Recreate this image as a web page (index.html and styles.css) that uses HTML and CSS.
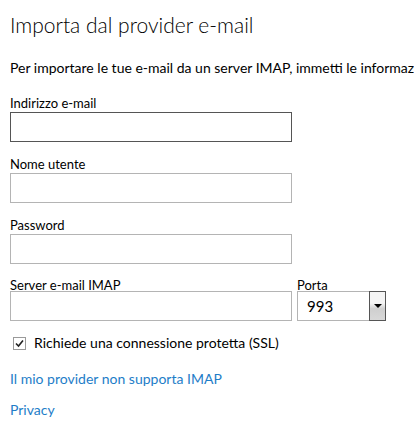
FILE: index.html
```html
<!DOCTYPE html>
<html lang="it">
<head>
<meta charset="utf-8">
<title>Importa dal provider e-mail</title>
<link rel="stylesheet" href="styles.css">
</head>
<body>
<div class="wrap">
	<h1 class="title">Importa dal provider e-mail</h1>
	<p class="intro">Per importare le tue e-mail da un server IMAP, immetti le informazioni richieste.</p>

	<div class="field">
		<label class="label">Indirizzo e-mail</label>
		<input class="input focus" type="text">
	</div>
	<div class="field">
		<label class="label">Nome utente</label>
		<input class="input" type="text">
	</div>
	<div class="field">
		<label class="label">Password</label>
		<input class="input" type="password">
	</div>
	<div class="row">
		<div class="field">
			<label class="label">Server e-mail IMAP</label>
			<input class="input" type="text">
		</div>
		<div class="field">
			<label class="label">Porta</label>
			<div class="select">
				<span class="select_value">993</span>
				<span class="select_btn"><span class="arrow"></span></span>
			</div>
		</div>
	</div>

	<label class="check">
		<span class="check_box">
			<svg width="11" height="11" viewBox="0 0 11 11"><path d="M2 5.5 L4.5 8 L9 2.5" fill="none" stroke="#222" stroke-width="1.6"/></svg>
		</span>
		<span class="check_text">Richiede una connessione protetta (SSL)</span>
	</label>

	<ul class="links">
		<li><a href="">Il mio provider non supporta IMAP</a></li>
		<li><a href="">Privacy</a></li>
	</ul>
</div>
</body>
</html>
```
FILE: styles.css
```css
* {margin:0; padding:0; box-sizing:border-box}
li {list-style:none}
html, body {background:#fff; overflow:hidden}
body {font-family:Lato, "Liberation Sans", sans-serif; color:#000}

.wrap {
	padding:10px 0 0 10px;
	width:414px;
	height:428px;
	overflow:hidden;
}
.title {
	font-weight:300;
	font-size:21px;
	line-height:30px;
	color:#000;
}
.intro {
	margin-top:19px;
	font-size:14px;
	line-height:18px;
	white-space:nowrap;
}

.field {margin-top:14px}
.intro + .field {margin-top:18px}
.label {
	display:block;
	font-size:13px;
	line-height:16px;
	height:17px;
}
.input {
	display:block;
	width:282px;
	height:30px;
	border:1px solid #b4b4b4;
	background:#fff;
	outline:none;
}
.input.focus {border-color:#555}

.row {display:flex; gap:5px}
.row .field {margin-top:13px}
.row .label {height:14px}
.select {
	display:flex;
	width:89px;
	height:30px;
	border:1px solid #b4b4b4;
	align-items:center;
}
.select_value {
	flex:1;
	padding-left:9px;
	font-size:15px;
}
.select_btn {
	display:flex;
	align-items:center;
	justify-content:center;
	width:17px;
	height:30px;
	margin:-1px -1px -1px 0;
	border:1px solid #555;
	background:linear-gradient(#f4f4f4 40%, #cfcfcf 60%, #d8d8d8);
}
.arrow {
	width:0; height:0;
	border-left:4px solid transparent;
	border-right:4px solid transparent;
	border-top:4px solid #000;
}

.check {
	display:flex;
	align-items:center;
	gap:8px;
	margin:13px 0 0 3px;
	font-size:14px;
	line-height:18px;
}
.check_box {
	display:flex;
	align-items:center;
	justify-content:center;
	width:13px;
	height:13px;
	border:1px solid #9a9a9a;
	background:#fff;
}

.links {margin-top:18px}
.links li {font-size:14px; line-height:18px}
.links li + li {margin-top:13px}
.links a {color:#1e7dc8; text-decoration:none}
```
